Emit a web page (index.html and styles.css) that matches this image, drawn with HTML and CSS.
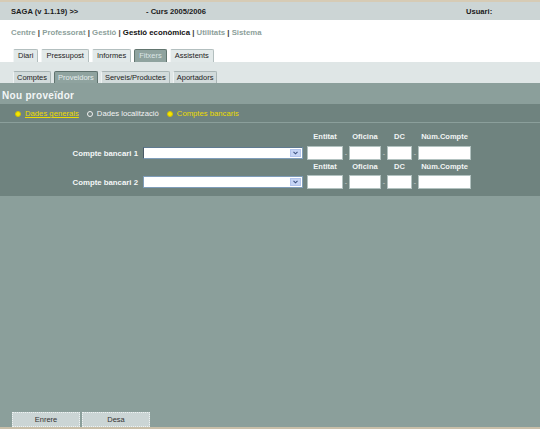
FILE: index.html
```html
<!DOCTYPE html>
<html lang="ca">
<head>
<meta charset="utf-8">
<title>SAGA - Nou proveïdor</title>
<link rel="stylesheet" href="styles.css">
</head>
<body>
<div class="page">
  <div class="topbar">
    <span>SAGA (v 1.1.19) &gt;&gt;</span>
    <span>- Curs 2005/2006</span>
    <span>Usuari:</span>
  </div>
  <div class="navarea">
    <div class="nav">
      <span class="link">Centre</span> | <span class="link">Professorat</span> | <span class="link">Gestió</span> | <span class="cur">Gestió econòmica</span> | <span class="link">Utilitats</span> | <span class="link">Sistema</span>
    </div>
    <div class="tabs">
      <span class="tab">Diari</span>
      <span class="tab">Pressupost</span>
      <span class="tab">Informes</span>
      <span class="tab active">Fitxers</span>
      <span class="tab">Assistents</span>
    </div>
  </div>
  <div class="subtabs">
    <span class="subtab">Comptes</span>
    <span class="subtab active">Proveidors</span>
    <span class="subtab">Serveis/Productes</span>
    <span class="subtab">Aportadors</span>
  </div>
  <div class="main">
    <div class="title">Nou proveïdor</div>
    <div class="steps">
      <span class="step done"><span class="dot"></span><span class="step-label underline">Dades generals</span></span>
      <span class="step"><span class="dot empty"></span><span class="step-label">Dades localització</span></span>
      <span class="step current"><span class="dot"></span><span class="step-label">Comptes bancaris</span></span>
    </div>
    <div class="form">
      <div class="acct first">
        <span class="hdr c-ent">Entitat</span>
        <span class="hdr c-ofi">Oficina</span>
        <span class="hdr c-dc">DC</span>
        <span class="hdr c-num">Núm.Compte</span>
        <span class="lbl">Compte bancari 1</span>
        <div class="select focus"><span class="arrow"><svg width="5" height="4" viewBox="0 0 5 4"><path d="M0.5 0.8 L2.5 2.8 L4.5 0.8" fill="none" stroke="#3d5280" stroke-width="1.1"/></svg></span></div>
        <input class="fld c-ent" type="text">
        <span class="dash c-d1">-</span>
        <input class="fld c-ofi" type="text">
        <span class="dash c-d2">-</span>
        <input class="fld c-dc" type="text">
        <span class="dash c-d3">-</span>
        <input class="fld c-num" type="text">
      </div>
      <div class="acct second">
        <span class="hdr c-ent">Entitat</span>
        <span class="hdr c-ofi">Oficina</span>
        <span class="hdr c-dc">DC</span>
        <span class="hdr c-num">Núm.Compte</span>
        <span class="lbl">Compte bancari 2</span>
        <div class="select"><span class="arrow"><svg width="5" height="4" viewBox="0 0 5 4"><path d="M0.5 0.8 L2.5 2.8 L4.5 0.8" fill="none" stroke="#3d5280" stroke-width="1.1"/></svg></span></div>
        <input class="fld c-ent" type="text">
        <span class="dash c-d1">-</span>
        <input class="fld c-ofi" type="text">
        <span class="dash c-d2">-</span>
        <input class="fld c-dc" type="text">
        <span class="dash c-d3">-</span>
        <input class="fld c-num" type="text">
      </div>
    </div>
    <div class="buttons">
      <button class="btn" type="button">Enrere</button>
      <button class="btn" type="button">Desa</button>
    </div>
  </div>
</div>
</body>
</html>
```
FILE: styles.css
```css
* { box-sizing: border-box; margin: 0; padding: 0; }
html, body { width: 540px; height: 429px; overflow: hidden; }
body {
  margin: 0;
  font-family: "Liberation Sans", Arial, sans-serif;
  font-size: 8px;
  color: #222;
  background: #8b9f9b;
}
.page {
  height: 429px;
  display: flex;
  flex-direction: column;
  border-top: 2px solid #d6cbb5;
  border-bottom: 2px solid #c9bfa9;
  background: #8b9f9b;
}
.topbar {
  flex: none;
  height: 18px;
  background: #ccd5d5;
  display: grid;
  grid-template-columns: 135px 320px auto;
  align-items: center;
  padding-left: 11px;
  font-weight: bold;
  font-size: 7.6px;
  color: #1a1a1a;
}
.navarea {
  flex: none;
  height: 42px;
  background: #fff;
  display: flex;
  flex-direction: column;
  padding-top: 8px;
}
.nav {
  line-height: 10px;
  padding-left: 11px;
  font-weight: bold;
  font-size: 7.8px;
  color: #3b3b3b;
}
.nav .link { color: #8d9f9b; }
.nav .cur { color: #111; }
.tabs {
  margin-top: auto;
  display: flex;
  gap: 3px;
  padding-left: 13px;
  align-items: flex-end;
}
.tab {
  height: 13px;
  line-height: 12px;
  padding: 0 4px;
  background: #e2e9e9;
  border: 1px solid #b3bfbf;
  border-left-color: #f2f5f5;
  border-bottom: none;
  border-radius: 2px 2px 0 0;
  font-size: 7.5px;
  color: #222;
}
.tab.active {
  background: #8fa39f;
  border-color: #62756f;
  color: #dce6e6;
}
.subtabs {
  flex: none;
  height: 21px;
  background: #dfe6e6;
  padding-top: 9px;
  padding-left: 13px;
  display: flex;
  gap: 3px;
  align-items: flex-end;
}
.subtab {
  height: 12px;
  line-height: 11px;
  padding: 0 3px;
  background: #d2dbdb;
  border: 1px solid #a9b5b5;
  border-left-color: #eef2f2;
  border-bottom: none;
  border-radius: 2px 2px 0 0;
  font-size: 7.5px;
  color: #222;
}
.subtab.active {
  background: #8fa39f;
  border-color: #5f726e;
  color: #e4ecec;
}
.main {
  flex: 1;
  display: flex;
  flex-direction: column;
  background: #8b9f9b;
}
.title {
  height: 21px;
  padding-top: 7px;
  padding-left: 2px;
  line-height: 12px;
  font-size: 10px;
  font-weight: bold;
  letter-spacing: 0.3px;
  color: #f2f6f6;
}
.steps {
  height: 18px;
  background: #6f837f;
  display: flex;
  align-items: center;
  padding-left: 15px;
  padding-top: 1px;
  margin-bottom: 1px;
  font-size: 7.7px;
}
.step {
  display: flex;
  align-items: center;
  gap: 4px;
  margin-right: 8px;
  color: #f3f3f3;
}
.step.done, .step.current { color: #ecdc00; }
.underline { text-decoration: underline; }
.dot {
  width: 6px;
  height: 6px;
  border-radius: 50%;
  background: #f5e600;
  border: 1px solid #d2c200;
}
.dot.empty {
  background: transparent;
  border: 1px solid #f0f0f0;
}
.form {
  height: 73px;
  background: #6f837f;
  padding-top: 9px;
}
.acct {
  display: grid;
  grid-template-columns: 138px 5px 160px 4px 36px 6px 32px 6px 25px 6px 53px;
  grid-template-rows: 10px 14px;
}
.acct.first { row-gap: 4px; }
.acct.second { row-gap: 3px; margin-top: 2px; }
.hdr {
  grid-row: 1;
  text-align: center;
  font-weight: bold;
  font-size: 7.5px;
  line-height: 10px;
  color: #f2f5f5;
  white-space: nowrap;
}
.lbl {
  grid-row: 2;
  grid-column: 1;
  text-align: right;
  align-self: center;
  font-weight: bold;
  font-size: 7.8px;
  color: #f4f7f7;
  white-space: nowrap;
}
.c-ent { grid-column: 5; }
.c-ofi { grid-column: 7; }
.c-dc { grid-column: 9; }
.c-num { grid-column: 11; }
.c-d1 { grid-column: 6; }
.c-d2 { grid-column: 8; }
.c-d3 { grid-column: 10; }
.select {
  grid-row: 2;
  grid-column: 3;
  align-self: center;
  height: 12px;
  background: #fff;
  border: 1px solid #7f9db9;
  display: flex;
  justify-content: flex-end;
  align-items: center;
  padding-right: 1px;
}
.select.focus { border-left-color: #4a5a66; border-top-color: #5f7a90; }
.arrow {
  width: 11px;
  height: 8px;
  background: #c6d5f6;
  border: 1px solid #b3c5ee;
  display: flex;
  align-items: center;
  justify-content: center;
}
.arrow svg { display: block; }
.fld {
  grid-row: 2;
  width: 100%;
  height: 14px;
  background: #fff;
  border: 1px solid #b2c2c0;
  outline: none;
}
.dash {
  grid-row: 2;
  text-align: center;
  font-size: 7px;
  line-height: 16px;
  color: #c9d3d3;
}
.buttons {
  margin-top: auto;
  display: flex;
  gap: 2px;
  padding-left: 12px;
}
.btn {
  width: 68px;
  height: 15px;
  background: #cbd5d5;
  border: 1px dotted #eef3f3;
  font-family: "Liberation Sans", Arial, sans-serif;
  font-size: 7.5px;
  color: #333;
  line-height: 12px;
}
```
